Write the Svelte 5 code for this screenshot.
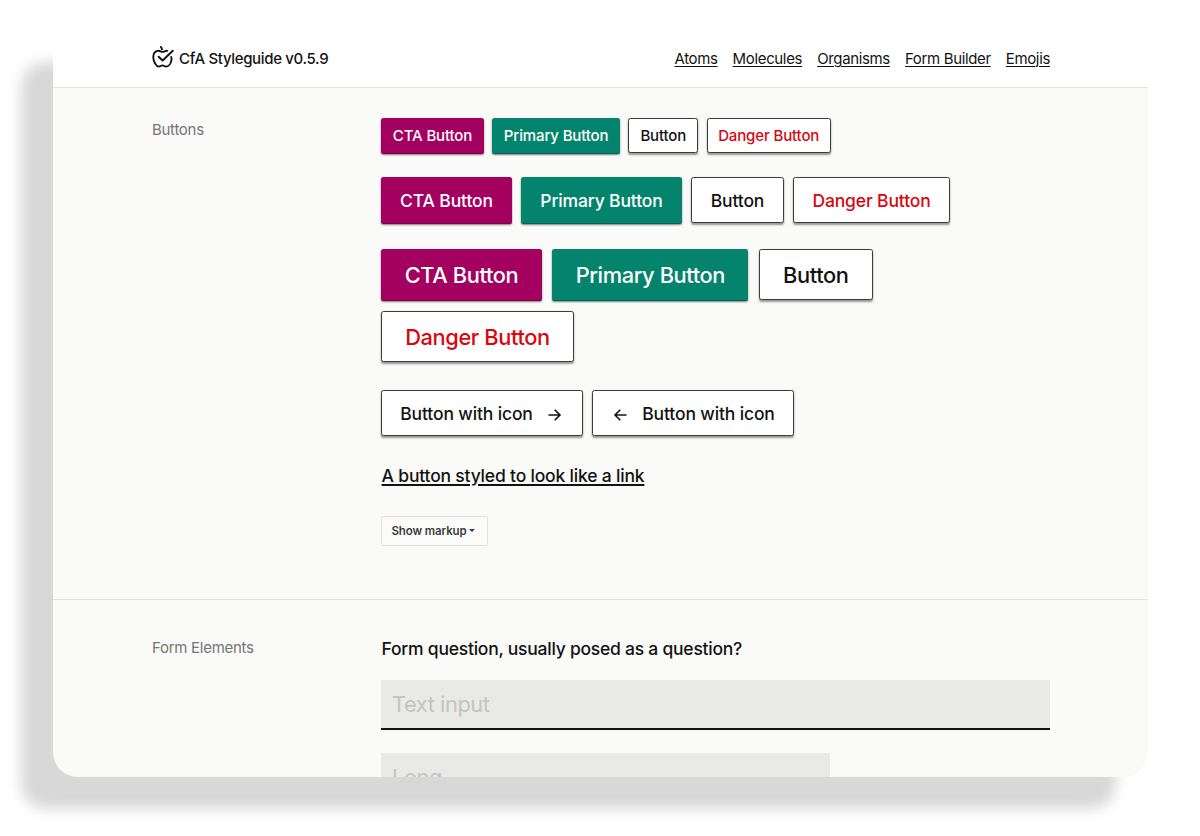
<script>
  const links = ['Atoms', 'Molecules', 'Organisms', 'Form Builder', 'Emojis'];
  const rows = [
    { size: 'small', widths: [103, 127.5, 70, 124] },
    { size: 'medium', widths: [131, 161, 93, 157] },
    { size: 'large', widths: [161, 196, 114, 193] }
  ];
  const kinds = [
    { kind: 'cta', label: 'CTA Button' },
    { kind: 'primary', label: 'Primary Button' },
    { kind: 'plain', label: 'Button' },
    { kind: 'danger', label: 'Danger Button' }
  ];
</script>

<div class="stage">
  <main class="card">
    <header>
      <div class="brand">
        <svg width="23" height="24" viewBox="0 0 23 24" fill="none" stroke="#121212" stroke-width="1.9" stroke-linecap="round" stroke-linejoin="round">
          <path d="M15.3 5.8C13.5 5.3 12.2 6.9 10.5 6.9C8.8 6.9 7.9 5.4 5.6 5.9C2.5 6.6 1.1 9.3 1.3 12.8C1.5 16.6 4 21.4 6.8 21.6C8.3 21.7 9 20.4 10.5 20.4C12 20.4 12.6 21.7 14.2 21.6C16.8 21.4 18.9 18.3 19.4 15.3C19.6 14 19.5 12.9 19.2 11.9" />
          <path d="M6.6 11.7L10.6 15.5L20.8 5.7" />
          <path d="M10 4.4C9.8 3.4 9.4 2.6 8.8 1.9" />
        </svg>
        <span>CfA Styleguide v0.5.9</span>
      </div>
      <nav>
        {#each links as link}<a href="#top">{link}</a>{/each}
      </nav>
    </header>

    <section class="buttons">
      <h2>Buttons</h2>
      <div class="content">
        {#each rows as row}
          <div class="row {row.size}">
            {#each kinds as item, i}
              <button class="btn {item.kind}" style="width: {row.widths[i]}px">{item.label}</button>
            {/each}
          </div>
        {/each}
        <div class="row medium icons">
          <button class="btn plain with-icon trailing">
            <span>Button with icon</span>
            <svg width="14" height="14" viewBox="0 0 14 14"><path d="M0.5 7H11.8M6.7 1.7L12 7L6.7 12.3" /></svg>
          </button>
          <button class="btn plain with-icon leading">
            <svg width="14" height="14" viewBox="0 0 14 14"><path d="M13.5 7H2.2M7.3 1.7L2 7L7.3 12.3" /></svg>
            <span>Button with icon</span>
          </button>
        </div>
        <button class="link">A button styled to look like a link</button>
        <button class="markup">Show markup<i></i></button>
      </div>
    </section>

    <section class="forms">
      <h2>Form Elements</h2>
      <div class="content">
        <p>Form question, usually posed as a question?</p>
        <div class="field">Text input</div>
        <div class="field long">Long</div>
      </div>
    </section>
  </main>
</div>

<style>
  :global(body) {
    margin: 0;
    background: #fff;
  }
  .stage {
    box-sizing: border-box;
    height: 836px;
    padding: 30px 52px 0 53px;
    overflow: hidden;
    font-family: Inter, "Liberation Sans", sans-serif;
    color: #121212;
  }
  .card {
    height: 747px;
    overflow: hidden;
    border-radius: 25px;
    background: #fafaf8;
    box-shadow: -32px 32px 14px #d8d8d8;
  }
  header {
    box-sizing: border-box;
    height: 58px;
    padding: 0 98px 0 99px;
    display: flex;
    justify-content: space-between;
    background: #fff;
    border-bottom: 1px solid #e4dfda;
    font-size: 15px;
    line-height: 57px;
  }
  .brand {
    display: flex;
    gap: 4px;
    letter-spacing: -0.34px;
    font-weight: 450;
  }
  .brand svg {
    margin-top: 15px;
  }
  nav {
    display: flex;
    gap: 15px;
    letter-spacing: -0.35px;
  }
  nav a {
    color: inherit;
    text-underline-offset: 2px;
    text-decoration-thickness: 1px;
  }
  section {
    display: grid;
    grid-template-columns: 229px 1fr;
    padding: 0 98px 0 99px;
  }
  h2 {
    margin: 0;
    font-size: 15px;
    line-height: 20px;
    font-weight: 400;
    letter-spacing: -0.28px;
    color: #757575;
  }
  .buttons {
    box-sizing: border-box;
    height: 512px;
    padding-top: 30px;
    border-bottom: 1px solid #e2e1df;
  }
  .buttons h2 {
    margin-top: 2px;
  }
  .content {
    display: flex;
    flex-direction: column;
    align-items: flex-start;
  }
  .row {
    display: flex;
    flex-wrap: wrap;
    align-items: flex-start;
    gap: 9px;
  }
  button {
    box-sizing: border-box;
    padding: 0;
    font-family: inherit;
    white-space: nowrap;
  }
  .btn {
    display: flex;
    align-items: center;
    justify-content: center;
    height: var(--h);
    border: 1px solid #3c3c3c;
    border-radius: 2.5px;
    background: #fff;
    color: #121212;
    font-weight: 500;
    letter-spacing: -0.14px;
    box-shadow: 0 1.5px 2px rgba(0, 0, 0, 0.4);
  }
  .cta,
  .primary {
    height: calc(var(--h) + 1px);
    color: #fff;
    border: 0;
    border-bottom: 1px solid rgba(0, 0, 0, 0.25);
    box-shadow: 0 1px 2px rgba(0, 0, 0, 0.5);
  }
  .cta {
    background: #a3005f;
  }
  .primary {
    background: #04846c;
  }
  .danger {
    color: #d90610;
  }
  .small {
    --h: 35px;
    height: 59px;
    gap: 8.4px;
  }
  .small .btn {
    font-size: 15px;
  }
  .medium {
    --h: 46px;
    height: 72px;
  }
  .medium .btn {
    font-size: 17.5px;
  }
  .large {
    --h: 51px;
    height: 141px;
    align-content: flex-start;
    gap: 10px 10.4px;
  }
  .large .btn {
    font-size: 21.8px;
    letter-spacing: -0.38px;
  }
  .icons {
    height: 75px;
  }
  .icons .with-icon {
    width: 202px;
    gap: 15px;
  }
  .trailing {
    padding-right: 2px;
  }
  .leading {
    padding-left: 2px;
  }
  .with-icon svg {
    margin-top: 3px;
    fill: none;
    stroke: #121212;
    stroke-width: 1.6;
  }
  .link {
    height: 22px;
    padding-left: 0.6px;
    border: 0;
    background: none;
    color: #121212;
    font-size: 17.5px;
    line-height: 22px;
    font-weight: 500;
    letter-spacing: -0.19px;
    text-decoration: underline;
    text-decoration-thickness: 1.5px;
    text-underline-offset: 2px;
  }
  .markup {
    display: flex;
    align-items: center;
    width: 107px;
    height: 30px;
    margin-top: 29px;
    padding-left: 9.5px;
    border: 1px solid #e4dfda;
    border-radius: 2px;
    background: #fbfbf9;
    color: #3d3d3d;
    font-size: 11.5px;
    font-weight: 600;
    letter-spacing: -0.12px;
  }
  .markup i {
    margin: 0 0 1px 2.5px;
    border: 3px solid transparent;
    border-top: 3px solid #3d3d3d;
    border-bottom: 0;
  }
  .forms {
    padding-top: 37px;
  }
  .forms h2 {
    margin-top: 0.5px;
  }
  p {
    margin: 0 0 19px;
    padding-left: 0.6px;
    font-size: 17.5px;
    line-height: 24px;
    font-weight: 500;
    letter-spacing: -0.24px;
  }
  .field {
    box-sizing: border-box;
    width: 669px;
    height: 50px;
    padding-left: 11px;
    border-bottom: 2px solid #121212;
    background: #e9e9e7;
    color: #c4c4c3;
    font-size: 21.8px;
    line-height: 49px;
    letter-spacing: -0.42px;
  }
  .long {
    width: 449px;
    margin-top: 23px;
  }
</style>
